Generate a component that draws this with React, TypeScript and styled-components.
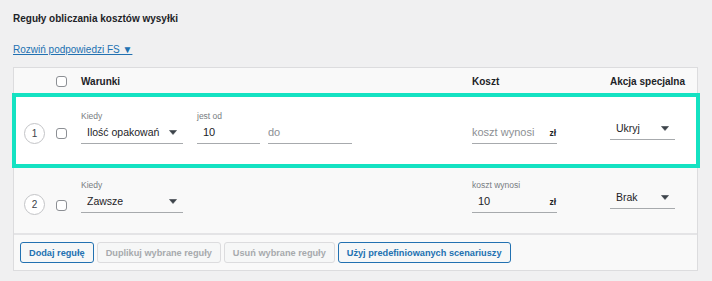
import React from "react";
import styled, { createGlobalStyle } from "styled-components";

const GlobalStyle = createGlobalStyle`
  html, body { margin: 0; padding: 0; }
  body {
    background: #f0f0f1;
    font-family: "Liberation Sans", Arial, sans-serif;
    color: #1d2327;
  }
  * { box-sizing: border-box; }
`;

const Page = styled.div`
  padding: 12px 14px 0 13px;
`;

const Title = styled.h3`
  margin: 0;
  font-size: 10px;
  line-height: 14px;
  font-weight: 700;
  color: #1d2327;
`;

const HintLink = styled.a`
  display: inline-block;
  margin-top: 17px;
  font-size: 10px;
  line-height: 14px;
  color: #2271b1;
  text-decoration: underline;
  cursor: pointer;
`;

const Table = styled.div`
  margin-top: 10px;
  border: 1px solid #dcdcde;
  background: #f9f9f9;
`;

const cols = "35px 32px 391px 138px 1fr";

const HeaderRow = styled.div`
  display: grid;
  grid-template-columns: ${cols};
  height: 25px;
  align-items: center;
  padding-top: 2px;
  font-size: 10px;
  font-weight: 700;
  color: #1d2327;
`;

const RuleRow = styled.div<{ $highlight?: boolean; $pt: number; $pb: number }>`
  position: relative;
  display: grid;
  grid-template-columns: ${cols};
  align-items: end;
  padding-top: ${(p) => p.$pt}px;
  padding-bottom: ${(p) => p.$pb}px;
  background: ${(p) => (p.$highlight ? "#ffffff" : "#f9f9f9")};
  &::after {
    content: "";
    display: ${(p) => (p.$highlight ? "block" : "none")};
    position: absolute;
    top: 0;
    bottom: 0;
    left: -2px;
    right: -3px;
    border: 4px solid #14e2c2;
    pointer-events: none;
  }
`;

const NumCell = styled.div<{ $drop?: number }>`
  padding-left: 10px;
  margin-bottom: ${(p) => -(p.$drop || 0)}px;
`;

const NumBadge = styled.div`
  width: 21px;
  height: 21px;
  border-radius: 50%;
  border: 1px solid #c3c4c7;
  background: #fff;
  font-size: 10px;
  color: #3c434a;
  display: flex;
  align-items: center;
  justify-content: center;
`;

const CheckCell = styled.div<{ $drop?: number }>`
  padding-left: 7px;
  height: 22px;
  display: flex;
  align-items: center;
  margin-bottom: ${(p) => -(p.$drop || 0)}px;
`;

const HeadCheckCell = styled.div`
  padding-left: 7px;
  display: flex;
  align-items: center;
`;

const Checkbox = styled.span`
  display: block;
  width: 11px;
  height: 11px;
  border: 1px solid #8c8f94;
  border-radius: 3px;
  background: #fff;
`;

const Conditions = styled.div`
  display: flex;
  align-items: flex-end;
`;

const Field = styled.div<{ $gap?: number }>`
  display: flex;
  flex-direction: column;
  margin-right: ${(p) => p.$gap || 0}px;
`;

const Label = styled.span`
  font-size: 8.5px;
  line-height: 10px;
  color: #787c82;
`;

const Select = styled.div<{ $w: number; $lift?: number }>`
  width: ${(p) => p.$w}px;
  height: 23px;
  border-bottom: 1px solid #a7aaad;
  display: flex;
  align-items: center;
  justify-content: space-between;
  padding: 0 6px 0 6px;
  font-size: 10.5px;
  color: #1d2327;
  margin-bottom: ${(p) => p.$lift || 0}px;
`;

const Caret = () => (
  <svg width="8" height="5" viewBox="0 0 8 5">
    <path d="M0.5 0.5h7L4 4.5z" fill="#3c434a" stroke="#3c434a" strokeWidth="0.6" strokeLinejoin="round" />
  </svg>
);

const InputBox = styled.div<{ $w: number }>`
  width: ${(p) => p.$w}px;
  height: 23px;
  border-bottom: 1px solid #a7aaad;
  display: flex;
  align-items: center;
`;

const Input = styled.input`
  flex: 1;
  min-width: 0;
  height: 22px;
  border: none;
  outline: none;
  background: transparent;
  padding: 0 6px;
  font-family: "Liberation Sans", Arial, sans-serif;
  font-size: 11px;
  color: #1d2327;
  &:placeholder-shown { padding-left: 0; }
  &::placeholder { color: #8c8f94; opacity: 1; }
`;

const Suffix = styled.span`
  font-size: 8.5px;
  font-weight: 700;
  color: #1d2327;
  padding-right: 1px;
  padding-top: 2px;
`;

const Footer = styled.div`
  border-top: 2px solid #e4e4e6;
  padding: 7px 6px 7px 6px;
  display: flex;
  gap: 3px;
`;

const Button = styled.button<{ $primary?: boolean }>`
  height: 21px;
  padding: 0 8px;
  border-radius: 3px;
  font-family: "Liberation Sans", Arial, sans-serif;
  font-size: 9.2px;
  font-weight: 700;
  cursor: pointer;
  background: #f6f7f7;
  border: 1px solid ${(p) => (p.$primary ? "#2271b1" : "#dcdcde")};
  color: ${(p) => (p.$primary ? "#2271b1" : "#a7aaad")};
`;

export default function App() {
  return (
    <>
      <GlobalStyle />
      <Page>
        <Title>Reguły obliczania kosztów wysyłki</Title>
        <HintLink>Rozwiń podpowiedzi FS ▼</HintLink>
        <Table>
          <HeaderRow>
            <div />
            <HeadCheckCell>
              <Checkbox />
            </HeadCheckCell>
            <div>Warunki</div>
            <div>Koszt</div>
            <div>Akcja specjalna</div>
          </HeaderRow>

          <RuleRow $highlight $pt={18} $pb={24}>
            <NumCell>
              <NumBadge>1</NumBadge>
            </NumCell>
            <CheckCell>
              <Checkbox />
            </CheckCell>
            <Conditions>
              <Field $gap={14}>
                <Label>Kiedy</Label>
                <Select $w={102}>
                  <span>Ilość opakowań</span>
                  <Caret />
                </Select>
              </Field>
              <Field $gap={8}>
                <Label>jest od</Label>
                <InputBox $w={63}>
                  <Input defaultValue="10" />
                </InputBox>
              </Field>
              <Field>
                <InputBox $w={84}>
                  <Input placeholder="do" />
                </InputBox>
              </Field>
            </Conditions>
            <Field>
              <InputBox $w={85}>
                <Input placeholder="koszt wynosi" />
                <Suffix>zł</Suffix>
              </InputBox>
            </Field>
            <Select $w={65} $lift={4}>
              <span>Ukryj</span>
              <Caret />
            </Select>
          </RuleRow>

          <RuleRow $pt={12} $pb={20}>
            <NumCell $drop={2}>
              <NumBadge>2</NumBadge>
            </NumCell>
            <CheckCell $drop={3}>
              <Checkbox />
            </CheckCell>
            <Conditions>
              <Field>
                <Label>Kiedy</Label>
                <Select $w={102}>
                  <span>Zawsze</span>
                  <Caret />
                </Select>
              </Field>
            </Conditions>
            <Field>
              <Label>koszt wynosi</Label>
              <InputBox $w={85}>
                <Input defaultValue="10" />
                <Suffix>zł</Suffix>
              </InputBox>
            </Field>
            <Select $w={65} $lift={4}>
              <span>Brak</span>
              <Caret />
            </Select>
          </RuleRow>

          <Footer>
            <Button $primary>Dodaj regułę</Button>
            <Button>Duplikuj wybrane reguły</Button>
            <Button>Usuń wybrane reguły</Button>
            <Button $primary>Użyj predefiniowanych scenariuszy</Button>
          </Footer>
        </Table>
      </Page>
    </>
  );
}
